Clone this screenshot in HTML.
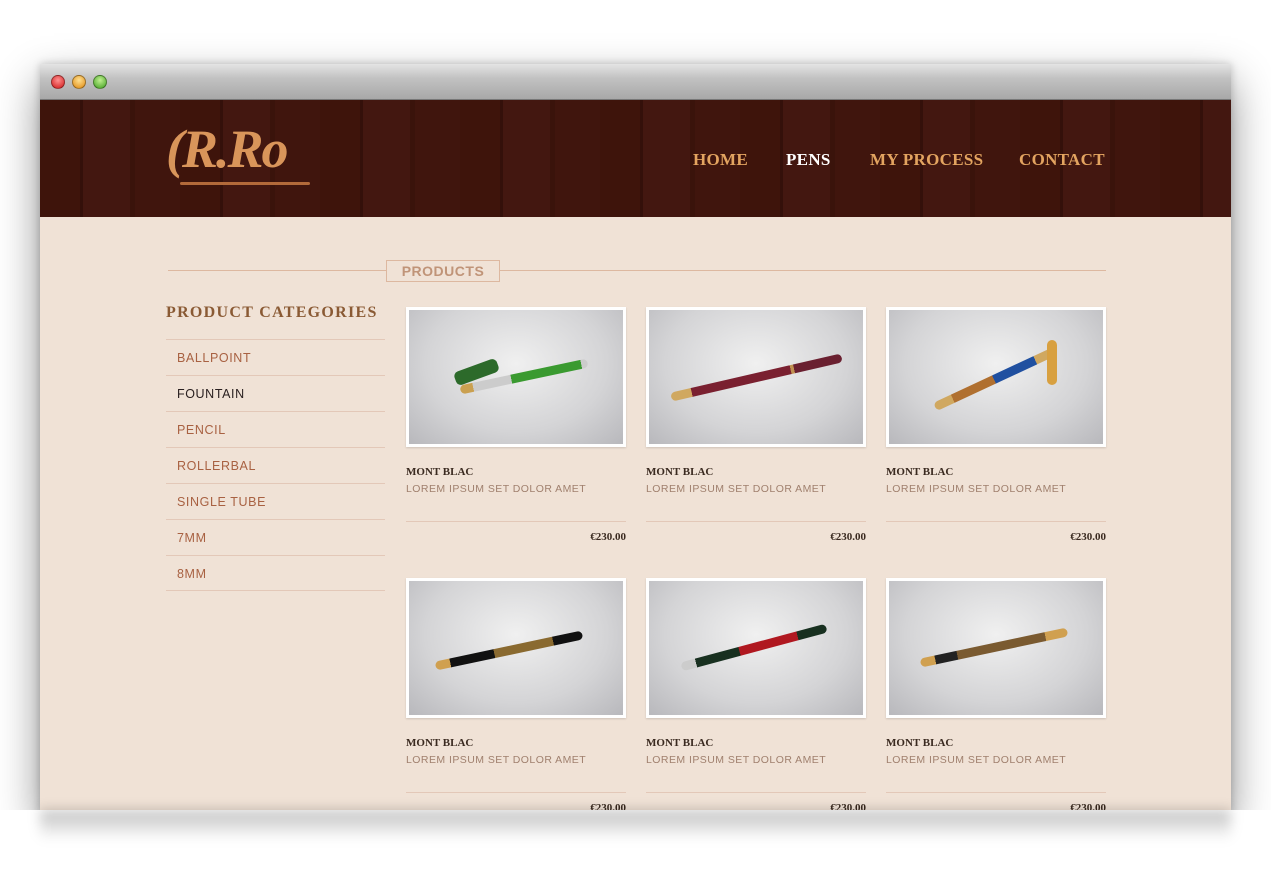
<!DOCTYPE html>
<html><head><style>
*{margin:0;padding:0;box-sizing:border-box}
body{width:1271px;height:885px;background:#fff;position:relative;overflow:hidden;font-family:"Liberation Sans",sans-serif}
.win{position:absolute;left:40px;top:64px;width:1191px;height:746px;box-shadow:0 18px 40px rgba(0,0,0,.45),0 0 8px rgba(0,0,0,.2);overflow:hidden;background:#f0e2d6}
.tb{height:36px;background:linear-gradient(#e4e4e4,#c2c2c2 40%,#a8a8a8);border-bottom:1px solid #777}
.dot{position:absolute;top:11px;width:14px;height:14px;border-radius:50%;border:1px solid rgba(0,0,0,.35)}
.hd{position:absolute;top:36px;left:0;width:1191px;height:117px;background:repeating-linear-gradient(90deg,#3e140b 0 40px,#34100a 40px 43px,#431710 43px 90px,#3a130b 90px 95px,#40150d 95px 140px);}
.logo{position:absolute;left:126px;top:18px;font:italic bold 54px "Liberation Serif",serif;color:#d9955a;letter-spacing:-2px}
.nav{position:absolute;top:50px;font:bold 17px "Liberation Serif",serif;color:#e3a460;letter-spacing:.3px}
.line{position:absolute;height:1px;background:#ddb8a0}
.tag{position:absolute;left:386px;top:260px;width:114px;height:22px;border:1px solid #ddb8a0;color:#c09478;font:bold 14px "Liberation Sans",sans-serif;text-align:center;line-height:21px;background:#f0e2d6;letter-spacing:.5px}
.cat{position:absolute;left:166px;width:219px;height:36px;border-top:1px solid #e3c8b8;font-size:12.5px;color:#a86142;padding-left:11px;line-height:36px;letter-spacing:.6px}
.card{position:absolute;width:220px}
.img{width:220px;height:140px;border:3px solid #fff;background:radial-gradient(ellipse at 50% 40%,#f0f0f0,#d4d4d6 60%,#b8b8bc);box-shadow:0 1px 2px rgba(0,0,0,.15);position:relative}
.pen{position:absolute;height:9px;border-radius:5px;transform-origin:center}
.t1{font:bold 11px "Liberation Serif",serif;color:#3a2a20;margin-top:19px}
.t2{font-size:10.5px;color:#a0806e;letter-spacing:.45px;margin-top:5px}
.pr{border-top:1px solid #e3c8b8;margin-top:26px;text-align:right;font:bold 11px "Liberation Serif",serif;color:#3a2a20;padding-top:9px}
</style></head><body>
<div class="win">
<div class="tb"></div>
<div class="dot" style="left:11px;background:radial-gradient(circle at 50% 35%,#ff9090,#d01818)"></div>
<div class="dot" style="left:32px;background:radial-gradient(circle at 50% 35%,#ffe090,#e08a10)"></div>
<div class="dot" style="left:53px;background:radial-gradient(circle at 50% 35%,#c0f090,#40a020)"></div>
<div class="hd">
<div class="logo">(R.Ro</div>
<div style="position:absolute;left:140px;top:82px;width:130px;height:3px;background:#b36a3a;border-radius:2px"></div>
<div class="nav" style="left:653px">HOME</div>
<div class="nav" style="left:746px;color:#fff">PENS</div>
<div class="nav" style="left:830px">MY PROCESS</div>
<div class="nav" style="left:979px">CONTACT</div>
</div>
</div>
<div class="line" style="left:168px;top:270px;width:938px"></div>
<div class="tag">PRODUCTS</div>
<div style="position:absolute;left:166px;top:304px;font:bold 16px 'Liberation Serif',serif;color:#8a5a34;letter-spacing:1.3px">PRODUCT CATEGORIES</div>
<div class="cat" style="top:339px">BALLPOINT</div>
<div class="cat" style="top:375px;color:#2a2020">FOUNTAIN</div>
<div class="cat" style="top:411px">PENCIL</div>
<div class="cat" style="top:447px">ROLLERBAL</div>
<div class="cat" style="top:483px">SINGLE TUBE</div>
<div class="cat" style="top:519px">7MM</div>
<div class="cat" style="top:555px;border-bottom:1px solid #e3c8b8">8MM</div>

<div class="card" style="left:406px;top:307px"><div class="img"><div class="pen" style="left:50px;top:62px;width:130px;transform:rotate(-12deg);background:linear-gradient(90deg,#caa050 0 10%,#ccc 10% 40%,#3a9a30 40% 95%,#ccc 95%)"></div><div class="pen" style="left:45px;top:55px;width:45px;height:14px;transform:rotate(-20deg);background:#2c6a2a"></div></div><div class="t1">MONT BLAC</div><div class="t2">LOREM IPSUM SET DOLOR AMET</div><div class="pr">€230.00</div></div>
<div class="card" style="left:646px;top:307px"><div class="img"><div class="pen" style="left:20px;top:63px;width:175px;transform:rotate(-13deg);background:linear-gradient(90deg,#d0a860 0 12%,#7a2030 12% 70%,#c09050 70% 72%,#6a2030 72%)"></div></div><div class="t1">MONT BLAC</div><div class="t2">LOREM IPSUM SET DOLOR AMET</div><div class="pr">€230.00</div></div>
<div class="card" style="left:886px;top:307px"><div class="img"><div class="pen" style="left:40px;top:65px;width:130px;transform:rotate(-25deg);background:linear-gradient(90deg,#d0a860 0 15%,#b07030 15% 50%,#2050a0 50% 85%,#d0a860 85%)"></div><div class="pen" style="left:158px;top:30px;width:10px;height:45px;background:#d8a040"></div></div><div class="t1">MONT BLAC</div><div class="t2">LOREM IPSUM SET DOLOR AMET</div><div class="pr">€230.00</div></div>

<div class="card" style="left:406px;top:578px"><div class="img"><div class="pen" style="left:25px;top:65px;width:150px;transform:rotate(-12deg);background:linear-gradient(90deg,#d0a050 0 10%,#111 10% 40%,#8a6a30 40% 80%,#111 80%)"></div></div><div class="t1">MONT BLAC</div><div class="t2">LOREM IPSUM SET DOLOR AMET</div><div class="pr">€230.00</div></div>
<div class="card" style="left:646px;top:578px"><div class="img"><div class="pen" style="left:30px;top:62px;width:150px;transform:rotate(-15deg);background:linear-gradient(90deg,#ccc 0 10%,#183020 10% 40%,#b01820 40% 80%,#183020 80%)"></div></div><div class="t1">MONT BLAC</div><div class="t2">LOREM IPSUM SET DOLOR AMET</div><div class="pr">€230.00</div></div>
<div class="card" style="left:886px;top:578px"><div class="img"><div class="pen" style="left:30px;top:62px;width:150px;transform:rotate(-12deg);background:linear-gradient(90deg,#d0a050 0 10%,#222 10% 25%,#7a5a30 25% 85%,#d0a050 85%)"></div></div><div class="t1">MONT BLAC</div><div class="t2">LOREM IPSUM SET DOLOR AMET</div><div class="pr">€230.00</div></div>
<div style="position:absolute;left:0;top:810px;width:1271px;height:75px;background:#fff"></div>
<div style="position:absolute;left:40px;top:810px;width:1191px;height:30px;background:linear-gradient(rgba(0,0,0,.25),rgba(0,0,0,0));filter:blur(6px)"></div>
</body></html>
